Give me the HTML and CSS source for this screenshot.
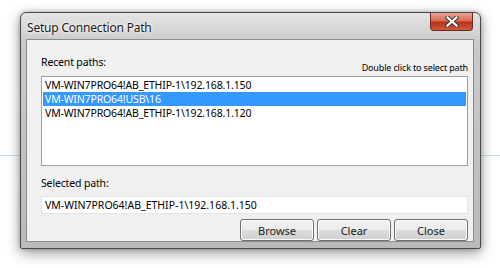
FILE: index.html
```html
<!DOCTYPE html>
<html lang="en">
<head>
  <meta charset="UTF-8" />
  <title>Setup Connection Path</title>
  <link rel="stylesheet" href="styles.css">
</head>
<body>
  <div class="rule"></div>

  <!-- Dialog window -->
  <div class="window">
    <div class="titlebar">
      <span class="title">Setup Connection Path</span>
      <button class="close-x" aria-label="Close">
        <svg width="14" height="11" viewBox="0 0 14 11">
          <path d="M2.5 1.5 L11.5 9.5 M11.5 1.5 L2.5 9.5" stroke="#3a3a3a" stroke-width="4" stroke-linecap="square"/>
          <path d="M2.5 1.5 L11.5 9.5 M11.5 1.5 L2.5 9.5" stroke="#ffffff" stroke-width="2.2" stroke-linecap="square"/>
        </svg>
      </button>
    </div>

    <div class="client">
      <div class="list-head">
        <label>Recent paths:</label>
        <span class="hint">Double click to select path</span>
      </div>
      <ul class="paths">
        <li>VM-WIN7PRO64!AB_ETHIP-1\192.168.1.150</li>
        <li class="selected">VM-WIN7PRO64!USB\16</li>
        <li>VM-WIN7PRO64!AB_ETHIP-1\192.168.1.120</li>
      </ul>

      <label class="field-label">Selected path:</label>
      <input class="path-input" type="text" value="VM-WIN7PRO64!AB_ETHIP-1\192.168.1.150" />

      <div class="buttons">
        <button>Browse</button>
        <button>Clear</button>
        <button>Close</button>
      </div>
    </div>
  </div>
</body>
</html>
```

FILE: styles.css
```css
body {
  margin: 0;
  background: #ffffff;
  font-family: "Noto Sans", "Open Sans", sans-serif;
  font-size: 10.5px;
  letter-spacing: -0.15px;
  color: #000;
  width: 500px;
  height: 268px;
  overflow: hidden;
  position: relative;
}

/* faint line behind the window */
.rule {
  position: absolute;
  left: 0;
  right: 0;
  top: 155px;
  height: 1px;
  background: #c6dde9;
}

/* Window frame */
.window {
  position: relative;
  margin: 12px 0 0 20px;
  width: 461px;
  height: 237px;
  box-sizing: border-box;
  border: 1px solid #4a4a4a;
  border-radius: 6px 6px 2px 2px;
  background: linear-gradient(#e4e4e4, #cacaca 30px, #bababa);
  box-shadow: 0 4px 14px rgba(0, 0, 0, 0.4), 0 0 4px rgba(0, 0, 0, 0.25);
  padding: 0 6px 6px 5px;
  display: flex;
  flex-direction: column;
}

.titlebar {
  height: 26px;
  display: flex;
  align-items: flex-start;
  justify-content: space-between;
}

.title {
  margin: 6px 0 0 1px;
  font-size: 12px;
  letter-spacing: -0.2px;
  color: #1e1e1e;
  text-shadow: 0 0 6px #fff, 0 0 3px #fff;
}

.close-x {
  width: 43px;
  height: 18px;
  margin-right: 1px;
  padding: 0;
  border: 1px solid #6b2a20;
  border-top: none;
  border-radius: 0 0 4px 4px;
  background: linear-gradient(#e8a593, #d66a53 45%, #b8321c 55%, #cf5a3c);
  display: flex;
  align-items: center;
  justify-content: center;
}

/* Client area */
.client {
  flex: 1;
  background: #f0f0f0;
  border: 1px solid #8c8c8c;
  padding: 0 5px 0 14px;
  display: flex;
  flex-direction: column;
}

.list-head {
  display: flex;
  justify-content: space-between;
  align-items: flex-end;
  margin-top: 15px;
  height: 21px;
}

.list-head label {
  line-height: 14px;
  margin-bottom: 7px;
}

.hint {
  font-size: 9px;
  line-height: 12px;
  margin-bottom: 2px;
}

.paths {
  list-style: none;
  margin: 0;
  padding: 1px;
  height: 90px;
  box-sizing: border-box;
  background: #fff;
  border: 1px solid #a0a0a0;
  line-height: 14px;
}

.paths li {
  padding-left: 2px;
}

.paths .selected {
  background: #3399ff;
  color: #fff;
}

.field-label {
  margin-top: 10px;
  line-height: 14px;
}

.path-input {
  margin-top: 6px;
  height: 18px;
  box-sizing: border-box;
  border: 1px solid #e3e3e3;
  background: #fff;
  font: inherit;
  padding: 0 3px;
}

.buttons {
  display: flex;
  justify-content: flex-end;
  gap: 3px;
  margin-top: 5px;
}

.buttons button {
  width: 74px;
  height: 22px;
  font: inherit;
  font-size: 11px;
  color: #1a1a1a;
  border: 1px solid #707070;
  border-radius: 3px;
  background: linear-gradient(#f2f2f2, #ebebeb 48%, #dddddd 52%, #cfcfcf);
  box-shadow: inset 0 0 0 1px #fcfcfc;
}
```
